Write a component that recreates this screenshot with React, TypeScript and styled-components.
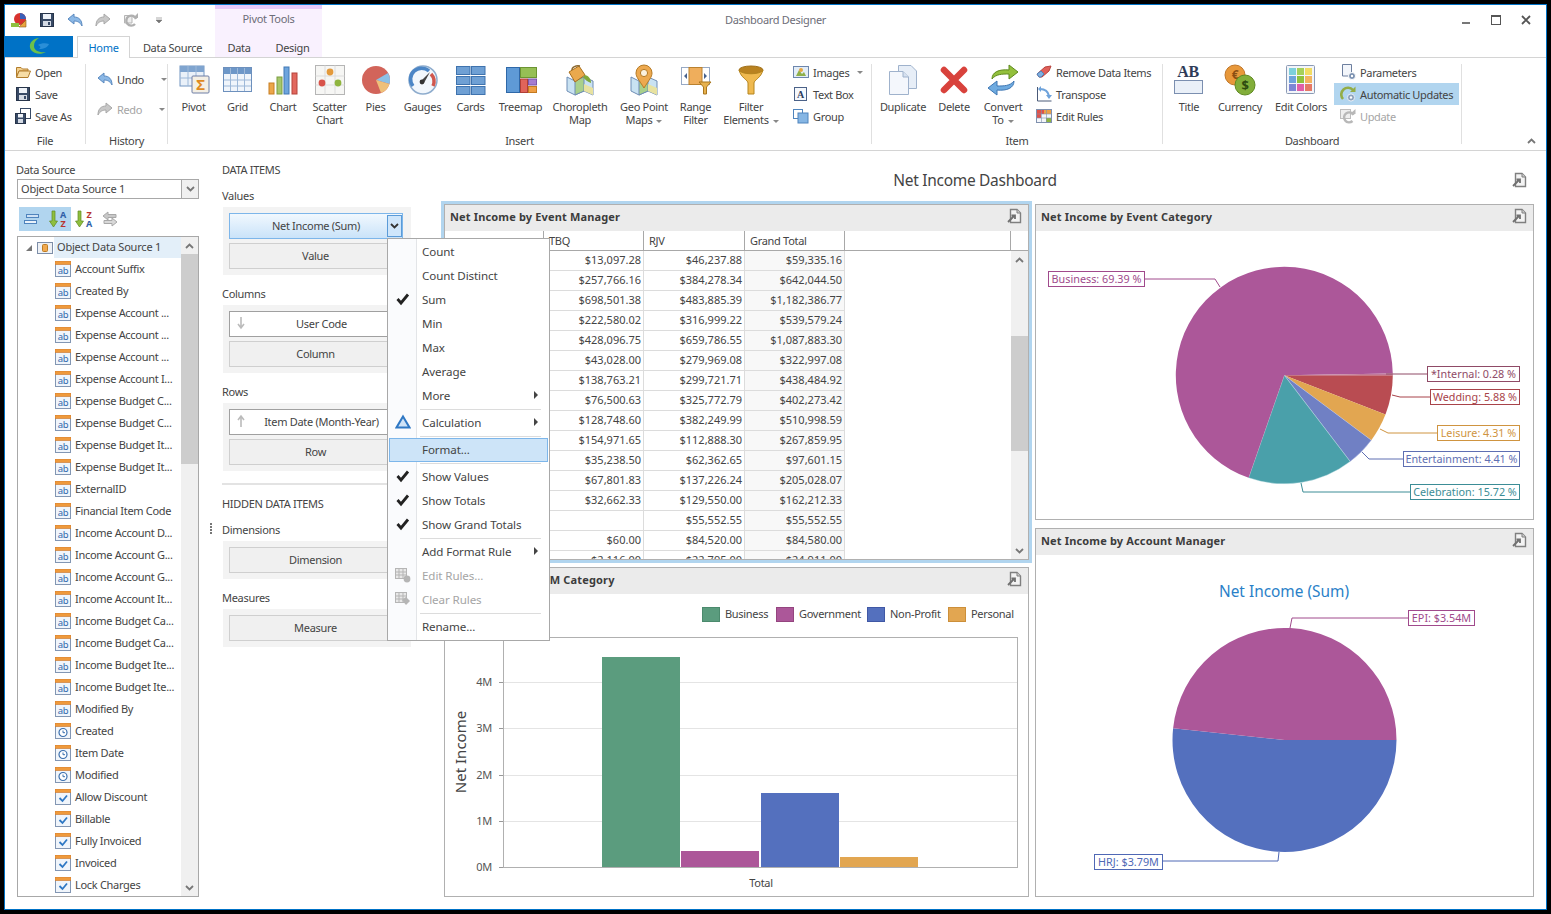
import React from "react";
import styled, { createGlobalStyle } from "styled-components";

const GlobalStyle = createGlobalStyle`
  html, body { margin:0; padding:0; background:#000; }
  body { font-family:"Noto Sans", "Liberation Sans", sans-serif; font-size:11px; letter-spacing:-0.3px; color:#444; }
  svg { display:block; flex-shrink:0; }
  svg text { font-family:"Noto Sans", "Liberation Sans", sans-serif; }
`;

const Window = styled.div`
  position:relative;
  box-sizing:border-box;
  margin:4px 4px 0;
  width:1543px;
  height:906px;
  background:#fff;
  border:1px solid #0072c6;
  display:flex;
  flex-direction:column;
  overflow:hidden;
`;

/* ---------- title area ---------- */
const TitleArea = styled.div`
  display:flex;
  height:52px;
  border-bottom:1px solid #d4d4d4;
  flex-shrink:0;
`;
const LeftStack = styled.div`
  width:210px;
  display:flex;
  flex-direction:column;
`;
const Qat = styled.div`
  display:flex;
  box-sizing:border-box;
  height:31px;
  padding-bottom:2px;
  align-items:center;
`;
const QatButton = styled.div`
  width:28px;
  display:flex;
  justify-content:center;
`;
const TabRow = styled.div`
  display:flex;
  height:21px;
`;
const LogoTab = styled.div`
  width:68px;
  margin-right:4px;
  background:#0072c6;
  display:flex;
  align-items:center;
  justify-content:center;
`;
const Tab = styled.div<{ $w: number; $active?: boolean }>`
  box-sizing:border-box;
  width:${p => p.$w}px;
  height:${p => (p.$active ? 22 : 21)}px;
  text-align:center;
  line-height:23px;
  color:${p => (p.$active ? "#0072c6" : "#444")};
  ${p => p.$active && "border:1px solid #d4d4d4; border-bottom:none; background:#fff; line-height:21px; position:relative; z-index:1;"}
`;
const ContextGroup = styled.div`
  width:107px;
  background:#f9f1fe;
  border-top:4px solid #e6c9fb;
  display:flex;
  flex-direction:column;
`;
const ContextTitle = styled.div`
  height:27px;
  text-align:center;
  line-height:20px;
  color:#6d6d78;
`;
const TitleRight = styled.div`
  flex:1;
  display:flex;
  align-items:flex-start;
  height:31px;
`;
const AppTitle = styled.div`
  flex:1;
  padding-left:403px;
  line-height:29px;
  color:#6d6d78;
`;
const WinControls = styled.div`
  display:flex;
  width:90px;
  height:29px;
  padding-right:5px;
  align-items:center;
`;
const WinButton = styled.div`
  width:30px;
  display:flex;
  justify-content:center;
`;

/* ---------- ribbon ---------- */
const Ribbon = styled.div`
  display:flex;
  box-sizing:border-box;
  height:93px;
  padding-top:6px;
  border-bottom:1px solid #d4d4d4;
  flex-shrink:0;
`;
const Group = styled.div<{ $w: number; $pad?: number }>`
  box-sizing:border-box;
  width:${p => p.$w}px;
  height:80px;
  flex-shrink:0;
  padding-left:${p => p.$pad ?? 0}px;
  border-right:1px solid #e0e0e0;
  display:flex;
  flex-direction:column;
`;
const GroupBody = styled.div`
  display:flex;
  height:70px;
  flex-shrink:0;
`;
const GroupLabel = styled.div<{ $pad?: number }>`
  line-height:13px;
  height:14px;
  flex-shrink:0;
  text-align:center;
  margin-left:-${p => p.$pad ?? 0}px;
  color:#444;
`;
const LargeButton = styled.div<{ $w: number }>`
  width:${p => p.$w}px;
  flex-shrink:0;
  display:flex;
  flex-direction:column;
  align-items:center;
`;
const LargeLabel = styled.div`
  margin-top:4px;
  line-height:13px;
  text-align:center;
  white-space:pre-line;
`;
const SmallColumn = styled.div<{ $left?: number; $gap?: number; $top?: number }>`
  display:flex;
  flex-direction:column;
  flex-shrink:0;
  margin-top:${p => p.$top ?? -3}px;
  margin-left:${p => p.$left ?? 0}px;
  gap:${p => p.$gap ?? 0}px;
`;
const SmallButton = styled.div<{ $disabled?: boolean; $on?: boolean }>`
  display:flex;
  align-items:center;
  height:22px;
  gap:4px;
  padding:0 ${p => (p.$on !== undefined ? 6 : 0)}px;
  white-space:nowrap;
  letter-spacing:-0.35px;
  color:${p => (p.$disabled ? "#a5a5a5" : "#444")};
  background:${p => (p.$on ? "#b1d5ef" : "transparent")};
`;
const Caret = styled.span<{ $gap?: number }>`
  display:inline-block;
  width:0;
  height:0;
  margin-left:${p => p.$gap ?? 4}px;
  margin-top:1px;
  vertical-align:middle;
  border-left:3px solid transparent;
  border-right:3px solid transparent;
  border-top:3px solid #888;
`;
const RibbonEnd = styled.div`
  flex:1;
  display:flex;
  justify-content:flex-end;
  align-items:flex-end;
  height:80px;
  padding:0 10px 2px 0;
`;

/* ---------- main ---------- */
const Main = styled.div`
  flex:1;
  display:flex;
  min-height:0;
`;
const SourcePane = styled.div`
  box-sizing:border-box;
  width:194px;
  padding:12px 0 0 11px;
  flex-shrink:0;
`;
const PlainLabel = styled.div`
  line-height:14px;
  height:14px;
  white-space:nowrap;
`;
const Combo = styled.div`
  box-sizing:border-box;
  margin:2px 0 0 1px;
  width:182px;
  height:20px;
  border:1px solid #a8a8a8;
  display:flex;
  align-items:center;
  padding:0 0 0 3px;
  justify-content:space-between;
  line-height:16px;
  letter-spacing:-0.2px;
`;
const ComboArrow = styled.div`
  width:16px;
  height:18px;
  border-left:1px solid #a8a8a8;
  background:#f0f0f0;
  display:flex;
  align-items:center;
  justify-content:center;
`;
const SortBar = styled.div`
  display:flex;
  margin:8px 0 0 3px;
  height:24px;
`;
const SortButton = styled.div<{ $on?: boolean }>`
  width:26px;
  height:24px;
  display:flex;
  align-items:center;
  justify-content:center;
  background:${p => (p.$on ? "#b1d5ef" : "transparent")};
`;
const TreeBox = styled.div`
  box-sizing:border-box;
  margin:5px 0 0 1px;
  width:182px;
  height:661px;
  border:1px solid #a8a8a8;
  display:flex;
`;
const TreeList = styled.div`
  flex:1;
  overflow:hidden;
`;
const RootRow = styled.div`
  display:flex;
  align-items:center;
  height:21px;
  padding-left:7px;
`;
const RootText = styled.div`
  background:#e3eff9;
  line-height:20px;
  height:21px;
  flex:1;
  padding-left:3px;
  margin-left:1px;
  letter-spacing:-0.2px;
`;
const TreeRow = styled.div`
  display:flex;
  align-items:center;
  height:22px;
  padding:0 0 1px 37px;
  box-sizing:border-box;
  gap:4px;
  white-space:nowrap;
`;
const ScrollBar = styled.div`
  width:17px;
  background:#f0f0f0;
  display:flex;
  flex-direction:column;
  flex-shrink:0;
`;
const ScrollArrow = styled.div`
  height:17px;
  display:flex;
  align-items:center;
  justify-content:center;
  flex-shrink:0;
`;
const ScrollTrack = styled.div`
  flex:1;
  min-height:0;
`;
const ScrollThumb = styled.div<{ $top: number; $h: number }>`
  margin-top:${p => p.$top}px;
  height:${p => p.$h}px;
  background:#cdcdcd;
`;
const Splitter = styled.div`
  width:23px;
  flex-shrink:0;
  display:flex;
  flex-direction:column;
  gap:1px;
  padding:372px 0 0 11px;
  box-sizing:border-box;
`;
const SplitDot = styled.div`
  width:2px;
  height:2px;
  background:#777;
`;
const ItemsPane = styled.div`
  width:189px;
  padding-top:12px;
  flex-shrink:0;
`;
const SectionTitle = styled(PlainLabel)`
  margin-bottom:12px;
`;
const SectionLabel = styled(PlainLabel)`
  margin-bottom:4px;
`;
const DropBox = styled.div`
  box-sizing:border-box;
  width:188px;
  margin:0 0 12px 1px;
  padding:6px 8px 6px 6px;
  background:#f3f3f3;
  display:flex;
  flex-direction:column;
  gap:4px;
`;
const DropButton = styled.div<{ $kind?: "selected" | "field" }>`
  box-sizing:border-box;
  position:relative;
  height:26px;
  width:174px;
  display:flex;
  align-items:center;
  justify-content:center;
  border:1px solid ${p => (p.$kind === "selected" ? "#7db6ea" : p.$kind === "field" ? "#a0a0a0" : "#cfcfcf")};
  background:${p => (p.$kind === "selected" ? "linear-gradient(#f1f8fe,#cae3f9)" : p.$kind === "field" ? "#fff" : "#f0f0f0")};
  padding:0 ${p => (p.$kind === "selected" ? 0 : 1)}px 2px ${p => (p.$kind === "field" ? 12 : 0)}px;
  white-space:nowrap;
`;
const DropSplit = styled.div`
  position:absolute;
  right:0;
  top:1px;
  box-sizing:border-box;
  width:15px;
  height:22px;
  border:1px solid #5b9bd8;
  background:#cfe6fb;
  display:flex;
  align-items:center;
  justify-content:center;
`;
const SortArrow = styled.div`
  position:absolute;
  left:5px;
  top:4px;
`;
const Divider = styled.div`
  height:2px;
  background:#e3e3e3;
  margin:0 0 12px 0;
`;

/* ---------- context menu ---------- */
const Menu = styled.div`
  position:absolute;
  z-index:5;
  left:382px;
  top:233px;
  box-sizing:border-box;
  width:163px;
  height:403px;
  border:1px solid #a8a8a8;
  padding:1px;
  background:linear-gradient(to right,#fafbfd 28px,#e3e5e8 28px,#e3e5e8 29px,#fff 29px);
`;
const MenuText = styled.div`
  flex:1;
  padding-left:5px;
`;
const MenuRow = styled.div<{ $hot?: boolean; $off?: boolean }>`
  box-sizing:border-box;
  height:24px;
  padding-bottom:2px;
  display:flex;
  align-items:center;
  font-size:11.6px;
  letter-spacing:-0.1px;
  color:${p => (p.$off ? "#a5a5a5" : "#444")};
  ${p => p.$hot && "background:#cde4f8; border:1px solid #7db6ea;"}
  ${MenuText} { padding-left:${p => (p.$hot ? 4 : 5)}px; }
`;
const MenuIcon = styled.div`
  width:28px;
  display:flex;
  justify-content:center;
  flex-shrink:0;
`;
const MenuArrow = styled.div`
  width:0;
  height:0;
  margin-right:10px;
  border-top:4px solid transparent;
  border-bottom:4px solid transparent;
  border-left:4px solid #444;
`;
const MenuSep = styled.div`
  height:3px;
  display:flex;
  align-items:center;
  padding:0 7px 0 31px;
  &::after { content:""; flex:1; height:1px; background:#dcdcdc; }
`;

/* ---------- dashboard ---------- */
const DashPane = styled.div`
  width:1120px;
  margin-left:4px;
  flex-shrink:0;
`;
const DashTitleRow = styled.div`
  display:grid;
  grid-template-columns:1fr auto 1fr;
  align-items:center;
  height:50px;
  padding-top:7px;
  box-sizing:border-box;
`;
const DashTitle = styled.div`
  grid-column:2;
  font-size:15.5px;
  color:#444;
`;
const DashTitleIcon = styled.div`
  justify-self:end;
  margin-right:7px;
`;
const DashGrid = styled.div`
  display:flex;
  gap:3px;
  padding-left:26px;
`;
const LeftCol = styled.div`
  width:591px;
  display:flex;
  flex-direction:column;
  gap:4px;
`;
const RightCol = styled.div`
  width:499px;
  padding-top:3px;
  display:flex;
  flex-direction:column;
  gap:8px;
`;
const Selected = styled.div`
  border:3px solid #b1d5ef;
`;
const Panel = styled.div<{ $h: number; $inset?: boolean }>`
  box-sizing:border-box;
  height:${p => p.$h}px;
  margin:0 ${p => (p.$inset ? 3 : 0)}px;
  border:1px solid #b0b0b0;
  display:flex;
  flex-direction:column;
  overflow:hidden;
`;
const PanelHead = styled.div`
  box-sizing:border-box;
  height:26px;
  flex-shrink:0;
  background:#ebebeb;
  display:flex;
  align-items:center;
  justify-content:space-between;
  padding:0 5px 4px;
  font-weight:700;
  font-size:11px;
  letter-spacing:0.15px;
  color:#3c3c3c;
`;
const PivotHead = styled.div`
  display:grid;
  grid-template-columns:99px 100px 101px 100px 1fr 17px;
  height:19px;
  flex-shrink:0;
  border-bottom:1px solid #a8a8a8;
`;
const PivotHeadCell = styled.div`
  border-right:1px solid #a8a8a8;
  padding-left:5px;
  line-height:19px;
  &:last-child { border-right:none; }
`;
const PivotBody = styled.div`
  flex:1;
  display:flex;
  min-height:0;
`;
const PivotRows = styled.div`
  flex:1;
  overflow:hidden;
`;
const PivotRow = styled.div`
  display:grid;
  grid-template-columns:99px 100px 101px 100px;
  height:20px;
`;
const PivotCell = styled.div<{ $total?: boolean }>`
  box-sizing:border-box;
  border-right:1px solid #dcdcdc;
  border-bottom:1px solid #dcdcdc;
  text-align:right;
  padding-right:2px;
  line-height:18px;
  letter-spacing:0;
  background:${p => (p.$total ? "#f8f8f8" : "#fff")};
`;

/* ---------- icons ---------- */
const Svg = ({ s = 32, children }: { s?: number; children: React.ReactNode }) => (
  <svg width={s} height={s} viewBox={`0 0 ${s} ${s}`}>{children}</svg>
);

const MapBase = () => (
  <>
    <polygon points="3,13 11,17 20,13 29,17 29,31 20,27 11,31 3,27" fill="#c9e2f2" stroke="#6f8db5" />
    <polygon points="11,17 20,13 20,27 11,31" fill="#a9d08a" stroke="#6f8db5" />
    <polygon points="20,20 29,24 29,31 20,27" fill="#e8e2a0" />
  </>
);

const big: Record<string, React.ReactNode> = {
  pivot: (
    <>
      <rect x="2" y="2" width="24" height="20" fill="#eaf1f9" stroke="#7396c2" />
      <rect x="2" y="2" width="24" height="6" fill="#7fa4cf" />
      <path d="M10 2v20M18 2v20M2 14h24" stroke="#9db8d8" />
      <rect x="14" y="12" width="17" height="17" rx="1" fill="#f4efe4" stroke="#6e7fa6" />
      <text x="22.5" y="26" fontSize="15" fontWeight="700" fill="#e08a1e" textAnchor="middle">Σ</text>
    </>
  ),
  grid: (
    <>
      <rect x="1.5" y="3.5" width="28" height="24" fill="#f0f5fb" stroke="#6d90bd" />
      <rect x="2" y="4" width="27" height="6" fill="#6d97c8" />
      <path d="M8.5 4v23M15.5 4v23M22.5 4v23M2 16h27M2 22h27" stroke="#9db8d8" />
    </>
  ),
  chart: (
    <>
      <rect x="2" y="19" width="5" height="11" fill="#eca64a" stroke="#c77f22" />
      <rect x="10" y="13" width="5" height="17" fill="#a7c76b" stroke="#7b9d41" />
      <rect x="17" y="3" width="5" height="27" fill="#6ea5dd" stroke="#4079b5" />
      <rect x="25" y="9" width="5" height="21" fill="#e2685e" stroke="#b5433a" />
    </>
  ),
  scatter: (
    <>
      <rect x="1.5" y="1.5" width="29" height="29" fill="#f6f6f4" stroke="#b5b5b5" />
      <path d="M1.5 12h29M1.5 21h29M11 1.5v29M21 1.5v29" stroke="#dcdcdc" />
      <circle cx="16" cy="8" r="3.4" fill="#e39a3c" />
      <circle cx="8" cy="19" r="3.4" fill="#d8534a" />
      <circle cx="24" cy="19" r="3.4" fill="#8fb53f" />
    </>
  ),
  pies: (
    <>
      <circle cx="16" cy="16" r="14" fill="#d2645a" />
      <path d="M16 16L28 9A14 14 0 0 1 29.5 20Z" fill="#8cc0e6" />
      <path d="M16 16L29.5 20A14 14 0 0 1 21 29Z" fill="#efc07a" />
    </>
  ),
  gauge: (
    <>
      <circle cx="16" cy="16" r="14" fill="#f2f7fc" stroke="#8eaccd" strokeWidth="1.5" />
      <path d="M6 22A11 11 0 0 1 22 7" fill="none" stroke="#4c86c6" strokeWidth="3.5" />
      <path d="M24 10A11 11 0 0 1 26 22" fill="none" stroke="#d0574e" strokeWidth="3.5" />
      <path d="M14 17L23 8L17 19Z" fill="#444" />
      <circle cx="15" cy="18" r="2.4" fill="#333" />
    </>
  ),
  cards: (
    <>
      {[2, 12, 22].map(y => [1, 16].map(x => (
        <rect key={`${x}-${y}`} x={x + 0.5} y={y + 0.5} width="13.5" height="8" fill="#6fa0d4" stroke="#3f73ae" />
      )))}
    </>
  ),
  treemap: (
    <>
      <rect x="1.5" y="3.5" width="13" height="25" fill="#5f9ad6" stroke="#2f68a8" />
      <rect x="15.5" y="3.5" width="16" height="10" fill="#96bf55" stroke="#6c9432" />
      <rect x="15.5" y="15" width="7" height="13.5" fill="#e0645a" stroke="#b03f36" />
      <rect x="23.5" y="15" width="8" height="6" fill="#a57cd0" stroke="#7b55a8" />
      <rect x="23.5" y="22.5" width="8" height="6" fill="#ef9f45" stroke="#c47a20" />
    </>
  ),
  choropleth: (
    <>
      <MapBase />
      <path d="M5 8L15 2L21 11L11 18Z" fill="#eaa94d" stroke="#a9701f" />
      <path d="M8 6A6 4 0 0 1 16 2" fill="none" stroke="#8c6a32" strokeWidth="1.5" />
      <path d="M21 11C25 12 27 15 27 19C24 18 21 16 19 13Z" fill="#7fa83a" />
    </>
  ),
  geo: (
    <>
      <MapBase />
      <path d="M16 24C11 16 8 13 8 9A8 8 0 0 1 24 9C24 13 21 16 16 24Z" fill="#eda94f" stroke="#b57a25" />
      <circle cx="16" cy="9" r="3.6" fill="#fbf1de" stroke="#b57a25" />
    </>
  ),
  range: (
    <>
      <rect x="1.5" y="3.5" width="28" height="17" fill="#fff" stroke="#97a9c4" />
      <rect x="9" y="3.5" width="13" height="17" fill="#efae5c" stroke="#b9812f" />
      <path d="M7 9v6l-3-3zM24 9v6l3-3z" fill="#46618d" />
      <path d="M19 18h12l-4.5 5v7h-3v-7Z" fill="#e6b14e" stroke="#a9761d" />
    </>
  ),
  filter: (
    <>
      <ellipse cx="16" cy="6" rx="12" ry="4" fill="#b98220" stroke="#a06f18" />
      <path d="M4 6C6 14 13 16 13 19V30H19V19C19 16 26 14 28 6C26 11 6 11 4 6Z" fill="#efb94f" stroke="#b5851f" />
    </>
  ),
  duplicate: (
    <>
      <path d="M11.5 1.5H24L29.5 7V24.5H11.5Z" fill="#e7eef7" stroke="#9fb2cc" />
      <path d="M2.5 7.5H16L21.5 13V30.5H2.5Z" fill="#f4f7fc" stroke="#9fb2cc" />
      <path d="M16 7.5V13H21.5" fill="#d6e1ef" stroke="#9fb2cc" />
    </>
  ),
  remove: (
    <path d="M6 6L26 26M26 6L6 26" stroke="#d8423c" strokeWidth="6.5" strokeLinecap="round" />
  ),
  convert: (
    <>
      <path d="M5 15C5 8 12 5 22 6V1L31 8L22 15V10C15 10 9 10 5 15Z" fill="#93c03c" stroke="#5f8a1f" />
      <path d="M27 17C27 24 20 27 10 26V31L1 24L10 17V22C17 22 23 22 27 17Z" fill="#6fabe0" stroke="#3e76b3" />
    </>
  ),
  title: (
    <>
      <text x="15" y="13" fontSize="16" fontWeight="700" fill="#2f3c58" textAnchor="middle" style={{ fontFamily: '"Liberation Serif", serif' }}>AB</text>
      <rect x="1.5" y="16.5" width="28" height="13" fill="#eaf0f8" stroke="#7b8fb0" />
    </>
  ),
  currency: (
    <>
      <circle cx="11" cy="11" r="10" fill="#e8983a" stroke="#c0772a" />
      <text x="11" y="15" fontSize="12" fontWeight="700" fill="#8a4f12" textAnchor="middle">€</text>
      <circle cx="21" cy="21" r="10" fill="#82ae3a" stroke="#5f8a22" />
      <text x="21" y="26" fontSize="13" fontWeight="700" fill="#2d4a10" textAnchor="middle">$</text>
    </>
  ),
  colors: (
    <>
      <rect x="1.5" y="1.5" width="28" height="28" rx="1" fill="#f3f5f9" stroke="#8b9ab5" />
      {["#7ed0dc", "#a5d05a", "#f1dc62", "#6fa4dc", "#8fc23c", "#f3b45e", "#7d86d4", "#e05fa8", "#e67865"].map((c, i) => (
        <rect key={c} x={4 + (i % 3) * 8} y={4 + Math.floor(i / 3) * 8} width="7" height="7" fill={c} />
      ))}
    </>
  ),
};

const Big = ({ name }: { name: string }) => <Svg>{big[name]}</Svg>;

const small: Record<string, React.ReactNode> = {
  open: (
    <>
      <path d="M1.5 3.5H6L7.5 5H13V7H4L1.5 13Z" fill="#f3cf8c" stroke="#b27d2c" />
      <path d="M1.5 13.5L4 7H15.5L13 13.5Z" fill="#f7dda6" stroke="#b27d2c" />
    </>
  ),
  save: (
    <>
      <rect x="1.5" y="1.5" width="13" height="13" fill="#384a66" stroke="#27344a" />
      <rect x="4" y="2" width="8" height="5" fill="#eef2f8" />
      <rect x="4" y="9" width="8" height="5" fill="#d4dae4" />
      <rect x="9" y="10" width="2" height="3" fill="#384a66" />
    </>
  ),
  saveAs: (
    <>
      <rect x="5.5" y="0.5" width="10" height="10" fill="#fff" stroke="#384a66" />
      <rect x="0.5" y="5.5" width="10" height="10" fill="#384a66" stroke="#27344a" />
      <rect x="3" y="6" width="5" height="3.5" fill="#eef2f8" />
      <rect x="3" y="11" width="5" height="4" fill="#d4dae4" />
    </>
  ),
  undo: <path d="M7 2L1 7L7 12V9C10 9 13 10 15 14C15 8 12 5 7 5Z" fill="#8bb8e6" stroke="#5a89bf" />,
  redo: <path d="M9 2L15 7L9 12V9C6 9 3 10 1 14C1 8 4 5 9 5Z" fill="#c8c8c8" stroke="#a8a8a8" />,
  repeat: (
    <>
      <path d="M1.5 3.5H9V11H1.5Z" fill="#eee" stroke="#b5b5b5" />
      <path d="M13 7A5 5 0 1 0 12 12" fill="none" stroke="#b0b0b0" strokeWidth="2.4" />
      <path d="M10 6H15V1Z" fill="#b0b0b0" />
    </>
  ),
  images: (
    <>
      <rect x="0.5" y="2.5" width="15" height="11" fill="#e3edf7" stroke="#6d86ad" />
      <path d="M3 12L6 6L9 10L11 8L13 12Z" fill="#8fb04a" />
      <circle cx="8" cy="6" r="2" fill="#e8a640" />
    </>
  ),
  textbox: (
    <>
      <rect x="1.5" y="1.5" width="12" height="13" fill="#f5f8fc" stroke="#4b6288" />
      <text x="7.5" y="12" fontSize="10" fontWeight="700" fill="#2a3b5c" textAnchor="middle" style={{ fontFamily: '"Liberation Serif", serif' }}>A</text>
    </>
  ),
  group: (
    <>
      <rect x="0.5" y="1.5" width="9" height="9" fill="#fff" stroke="#4f84bd" />
      <rect x="5" y="5" width="10" height="10" fill="#86b6e4" stroke="#4f84bd" />
    </>
  ),
  eraser: (
    <>
      <path d="M1 10L9 3L15 2L13 7L6 13H3Z" fill="#e0605a" stroke="#b8433d" />
      <path d="M1 10L5 7L8 10L5 13H3Z" fill="#7fb0e0" stroke="#4f84bd" />
    </>
  ),
  transpose: (
    <>
      <path d="M1.5 1v14h14" fill="none" stroke="#4a5a78" />
      <path d="M4 3C9 3 12 5 13 10" fill="none" stroke="#6fa3db" strokeWidth="2.2" />
      <path d="M10 9H16L13 13Z" fill="#6fa3db" />
      <path d="M5 0V6L2 3Z" fill="#6fa3db" />
    </>
  ),
  rules: (
    <>
      <rect x="0.5" y="1.5" width="15" height="13" fill="#f4f6fa" stroke="#7f90ae" />
      <rect x="1" y="2" width="7" height="4" fill="#e0524a" />
      <rect x="8" y="2" width="7" height="4" fill="#eea048" />
      <rect x="1" y="6" width="4" height="4" fill="#e0524a" />
      <rect x="10" y="10" width="5" height="4" fill="#8fb53f" />
      <path d="M5.5 2v12M10.5 2v12M1 6h14M1 10h14" stroke="#7f90ae" strokeWidth="0.6" />
    </>
  ),
  params: (
    <>
      <path d="M2.5 0.5H11.5V12H2.5Z" fill="#f3f6fb" stroke="#6d7f9f" />
      <circle cx="12" cy="12" r="3.5" fill="#7a90b0" stroke="#fff" />
      <circle cx="12" cy="12" r="1.2" fill="#fff" />
    </>
  ),
  auto: (
    <>
      <path d="M13 4A6.5 6.5 0 1 0 3 13" fill="none" stroke="#93ad47" strokeWidth="2.6" />
      <path d="M10 6H15.5V0.5Z" fill="#93ad47" />
      <circle cx="11" cy="11.5" r="3.6" fill="#8da2bd" stroke="#e8eef5" />
      <circle cx="11" cy="11.5" r="1.2" fill="#fff" />
    </>
  ),
  update: (
    <>
      <rect x="0.5" y="1.5" width="10" height="9" fill="#eee" stroke="#bdbdbd" />
      <path d="M13.5 7A5 5 0 1 0 12.5 13" fill="none" stroke="#b8b8b8" strokeWidth="2.4" />
      <path d="M10 6H15.5V1Z" fill="#b8b8b8" />
    </>
  ),
  export: (
    <>
      <path d="M3.5 1.5H10L13.5 5V14.5H3.5Z" fill="#f3f3f3" stroke="#7f7f7f" strokeWidth="1.4" />
      <path d="M10 1.5V5H13.5" fill="#cfcfcf" stroke="#7f7f7f" />
      <path d="M1 14L7 8M4.5 7.5H8V11" fill="none" stroke="#707070" strokeWidth="1.8" />
    </>
  ),
  tick: <path d="M2.5 8L6 12L13 3.5" fill="none" stroke="#222" strokeWidth="2.8" />,
  calc: (
    <>
      <path d="M8 2.5L14.5 13.5H1.5Z" fill="#cfe3f7" stroke="#2f78c4" strokeWidth="2" />
    </>
  ),
  editRules: (
    <>
      <rect x="0.5" y="1.5" width="11" height="10" fill="#e8e8e8" stroke="#b5b5b5" />
      <path d="M4 2v9M8 2v9M1 5h10M1 8h10" stroke="#b5b5b5" />
      <circle cx="12" cy="12" r="3.4" fill="#b5b5b5" />
    </>
  ),
  clearRules: (
    <>
      <rect x="0.5" y="1.5" width="11" height="10" fill="#e8e8e8" stroke="#b5b5b5" />
      <path d="M4 2v9M8 2v9M1 5h10M1 8h10" stroke="#b5b5b5" />
      <path d="M7 9L11 6L15 10L11 14Z" fill="#b5b5b5" />
    </>
  ),
  colAZ: (
    <>
      <rect x="2.5" y="3.5" width="12" height="3" fill="#cfe2f5" stroke="#4f84bd" />
      <rect x="0.5" y="9.5" width="12" height="3" fill="#eaf2fa" stroke="#4f84bd" />
    </>
  ),
  swap: (
    <>
      <path d="M1 5L6 1V3.5H14V6.5H6V9Z" fill="#c8c8c8" stroke="#a8a8a8" />
      <path d="M15 11L10 7V9.5H2V12.5H10V15Z" fill="#d8d8d8" stroke="#a8a8a8" />
    </>
  ),
  objSource: (
    <>
      <rect x="0.5" y="2.5" width="15" height="11" fill="#eef1f5" stroke="#7d8ea8" />
      <rect x="5.5" y="4.5" width="5" height="7" rx="1" fill="#f0a94f" stroke="#bd7c22" />
    </>
  ),
  app: (
    <>
      <circle cx="9" cy="7" r="6" fill="#d8332f" />
      <path d="M9 7V1A6 6 0 0 1 15 7Z" fill="#3a5fb8" />
      <path d="M0 11h8v4H0Z" fill="#8fbf3f" />
      <path d="M8 15L15 8V15Z" fill="#eaa640" stroke="#8a5a18" strokeWidth="0.6" />
    </>
  ),
};

const Sm = ({ name }: { name: string }) => <Svg s={16}>{small[name]}</Svg>;

const SortIcon = ({ top, bottom }: { top: string; bottom: string }) => (
  <svg width="20" height="21" viewBox="0 0 20 21">
    <path d="M4 2h3v10h2.5L5.5 18L1.5 12H4Z" fill="#8fbf3f" stroke="#5f8a1f" strokeWidth="0.7" />
    <text x="15" y="9" fontSize="9" fontWeight="700" fill={top === "A" ? "#2f5fa8" : "#b8332e"} textAnchor="middle">{top}</text>
    <text x="15" y="18" fontSize="9" fontWeight="700" fill={bottom === "A" ? "#2f5fa8" : "#b8332e"} textAnchor="middle">{bottom}</text>
  </svg>
);

const Chevron = ({ up, color = "#777" }: { up?: boolean; color?: string }) => (
  <svg width="9" height="6" viewBox="0 0 9 6">
    <path d={up ? "M1 5L4.5 1.5L8 5" : "M1 1L4.5 4.5L8 1"} fill="none" stroke={color} strokeWidth="1.8" />
  </svg>
);

const FieldIcon = ({ kind }: { kind: "ab" | "clock" | "check" }) => (
  <Svg s={16}>
    <rect x="0.5" y="0.5" width="15" height="15" fill="#f0f5fb" stroke="#8296b3" />
    <rect x="0" y="0" width="16" height="3.5" fill="#ef9a3c" stroke="#c9742a" strokeWidth="0.6" />
    {kind === "ab" && <text x="8" y="13" fontSize="9.5" fill="#2f68ad" textAnchor="middle">ab</text>}
    {kind === "clock" && (
      <>
        <circle cx="8" cy="9.5" r="4" fill="#fff" stroke="#3a6fae" strokeWidth="1.2" />
        <path d="M8 7.5v2.2h2" fill="none" stroke="#3a6fae" />
      </>
    )}
    {kind === "check" && <path d="M4.5 9L7.5 12L12 6.5" fill="none" stroke="#2f78c4" strokeWidth="1.8" />}
  </Svg>
);

const Logo = () => (
  <svg width="26" height="19" viewBox="0 0 26 19">
    <path d="M13 1C5 2 2 8 5 13C8 17 15 18 20 15C14 16 8 14 8 9C8 5 10 3 13 1Z" fill="#6cc04a" />
    <path d="M12 8C15 6 20 6 23 7C22 10 18 12 13 12C15 11 15 9 12 8Z" fill="#2a8fd8" />
  </svg>
);

/* ---------- data ---------- */
const fields: [string, "ab" | "clock" | "check"][] = [
  ["Account Suffix", "ab"], ["Created By", "ab"], ["Expense Account ...", "ab"], ["Expense Account ...", "ab"],
  ["Expense Account ...", "ab"], ["Expense Account I...", "ab"], ["Expense Budget C...", "ab"], ["Expense Budget C...", "ab"],
  ["Expense Budget It...", "ab"], ["Expense Budget It...", "ab"], ["ExternalID", "ab"], ["Financial Item Code", "ab"],
  ["Income Account D...", "ab"], ["Income Account G...", "ab"], ["Income Account G...", "ab"], ["Income Account It...", "ab"],
  ["Income Budget Ca...", "ab"], ["Income Budget Ca...", "ab"], ["Income Budget Ite...", "ab"], ["Income Budget Ite...", "ab"],
  ["Modified By", "ab"], ["Created", "clock"], ["Item Date", "clock"], ["Modified", "clock"],
  ["Allow Discount", "check"], ["Billable", "check"], ["Fully Invoiced", "check"], ["Invoiced", "check"], ["Lock Charges", "check"],
];

const pivotRows = [
  ["$13,097.28", "$46,237.88", "$59,335.16"],
  ["$257,766.16", "$384,278.34", "$642,044.50"],
  ["$698,501.38", "$483,885.39", "$1,182,386.77"],
  ["$222,580.02", "$316,999.22", "$539,579.24"],
  ["$428,096.75", "$659,786.55", "$1,087,883.30"],
  ["$43,028.00", "$279,969.08", "$322,997.08"],
  ["$138,763.21", "$299,721.71", "$438,484.92"],
  ["$76,500.63", "$325,772.79", "$402,273.42"],
  ["$128,748.60", "$382,249.99", "$510,998.59"],
  ["$154,971.65", "$112,888.30", "$267,859.95"],
  ["$35,238.50", "$62,362.65", "$97,601.15"],
  ["$67,801.83", "$137,226.24", "$205,028.07"],
  ["$32,662.33", "$129,550.00", "$162,212.33"],
  ["", "$55,552.55", "$55,552.55"],
  ["$60.00", "$84,520.00", "$84,580.00"],
  ["$2,116.00", "$22,795.00", "$24,911.00"],
];

const insertButtons: [string, string, number, boolean?][] = [
  ["pivot", "Pivot", 43], ["grid", "Grid", 45], ["chart", "Chart", 46], ["scatter", "Scatter\nChart", 47],
  ["pies", "Pies", 45], ["gauge", "Gauges", 49], ["cards", "Cards", 47], ["treemap", "Treemap", 53],
  ["choropleth", "Choropleth\nMap", 66], ["geo", "Geo Point\nMaps", 62, true], ["range", "Range\nFilter", 41], ["filter", "Filter\nElements", 70, true],
];

const piePoint = (cx: number, cy: number, r: number, deg: number) => {
  const a = (deg * Math.PI) / 180;
  return `${(cx + r * Math.cos(a)).toFixed(2)} ${(cy + r * Math.sin(a)).toFixed(2)}`;
};
const slice = (cx: number, cy: number, r: number, from: number, to: number) =>
  `M${cx} ${cy}L${piePoint(cx, cy, r, from)}A${r} ${r} 0 ${to - from > 180 ? 1 : 0} 1 ${piePoint(cx, cy, r, to)}Z`;

type PieLabel = { text: string; color: string; x: number; y: number; w: number; line: string };
const PieTag = ({ l }: { l: PieLabel }) => (
  <>
    <polyline points={l.line} fill="none" stroke={l.color} />
    <rect x={l.x} y={l.y} width={l.w} height="15" fill="#fff" stroke={l.color} />
    <text x={l.x + l.w / 2} y={l.y + 11.5} fontSize="10.8" letterSpacing="0" fill={l.color} textAnchor="middle">{l.text}</text>
  </>
);

const categoryLabels: PieLabel[] = [
  { text: "Business: 69.39 %", color: "#a04a8c", x: 1048.5, y: 271.5, w: 96, line: "1145,279 1215,279 1220,287" },
  { text: "*Internal: 0.28 %", color: "#8f4a66", x: 1427.5, y: 366.5, w: 92, line: "1427,374 1386,374" },
  { text: "Wedding: 5.88 %", color: "#a8434a", x: 1430.5, y: 389.5, w: 89, line: "1430,397 1400,397 1392,395" },
  { text: "Leisure: 4.31 %", color: "#cf9440", x: 1437.5, y: 425.5, w: 82, line: "1437,433 1388,433 1380,429" },
  { text: "Entertainment: 4.41 %", color: "#5f6fb2", x: 1403.5, y: 451.5, w: 116, line: "1403,459 1369,459 1362,452" },
  { text: "Celebration: 15.72 %", color: "#3c8d96", x: 1410.5, y: 484.5, w: 109, line: "1410,492 1303,492 1301,483" },
];

const accountLabels: PieLabel[] = [
  { text: "EPI: $3.54M", color: "#a04a8c", x: 1408.5, y: 610.5, w: 66, line: "1408,618 1292,618 1290,628" },
  { text: "HRJ: $3.79M", color: "#4f68b5", x: 1094.5, y: 854.5, w: 68, line: "1162,861 1278,861 1279,852" },
];

const CategoryPie = () => {
  const cx = 1284.3, cy = 375.3, r = 108.5;
  return (
    <svg width="497" height="288" viewBox="1036 231 497 288">
      <path d={slice(cx, cy, r, 0, 21.2)} fill="#b94c52" />
      <path d={slice(cx, cy, r, 21.2, 36.7)} fill="#e2a651" />
      <path d={slice(cx, cy, r, 36.7, 52.6)} fill="#7080c4" stroke="#c8d0ee" strokeWidth="0.4" />
      <path d={slice(cx, cy, r, 52.6, 109.2)} fill="#4aa0aa" stroke="#c8e4e8" strokeWidth="0.4" />
      <path d={slice(cx, cy, r, 109.2, 359)} fill="#ac5799" />
      <path d={slice(cx, cy, r, 359, 360)} fill="#c27a9a" />
      {categoryLabels.map(l => <PieTag key={l.text} l={l} />)}
    </svg>
  );
};

const AccountPie = () => {
  const cx = 1284.5, cy = 740, r = 112;
  return (
    <svg width="497" height="341" viewBox="1036 555 497 341">
      <text x="1284" y="597" fontSize="15.4" letterSpacing="0" fill="#2a7fc8" textAnchor="middle">Net Income (Sum)</text>
      <path d={slice(cx, cy, r, 0, 186)} fill="#5470be" />
      <path d={slice(cx, cy, r, 186, 360)} fill="#ac5799" />
      {accountLabels.map(l => <PieTag key={l.text} l={l} />)}
    </svg>
  );
};

const legend = [
  { name: "Business", color: "#5b9c7e", edge: "#4b8a6d", x: 702 },
  { name: "Government", color: "#ac5799", edge: "#94457f", x: 776 },
  { name: "Non-Profit", color: "#5470be", edge: "#4058a5", x: 867 },
  { name: "Personal", color: "#e2a651", edge: "#cc8f3a", x: 948 },
];
const bars = [
  { x: 602, y: 657, color: "#5b9c7e" },
  { x: 681, y: 851, color: "#ac5799" },
  { x: 761, y: 793, color: "#5470be" },
  { x: 840, y: 857, color: "#e2a651" },
];
const ticks = [["0M", 867], ["1M", 821], ["2M", 775], ["3M", 728], ["4M", 682]] as [string, number][];

const ColumnChart = () => (
  <svg width="583" height="302" viewBox="445 594 583 302">
    {legend.map(l => (
      <g key={l.name}>
        <rect x={l.x + 0.5} y="607.5" width="17" height="14" fill={l.color} stroke={l.edge} />
        <text x={l.x + 23} y="618" fontSize="11" fill="#444">{l.name}</text>
      </g>
    ))}
    <rect x="503.5" y="637.5" width="514" height="230" fill="#fff" stroke="#b0b0b0" />
    {ticks.map(([t, y]) => (
      <g key={t}>
        {y !== 867 && <line x1="504" x2="1017" y1={y + 0.5} y2={y + 0.5} stroke="#e4e4e4" />}
        <line x1="499" x2="503" y1={y + 0.5} y2={y + 0.5} stroke="#999" />
        <text x="492" y={y + 4} fontSize="11" fill="#555" textAnchor="end">{t}</text>
      </g>
    ))}
    {bars.map(b => <rect key={b.x} x={b.x} y={b.y} width="78" height={867 - b.y} fill={b.color} />)}
    <text x="761" y="887" fontSize="11" fill="#444" textAnchor="middle">Total</text>
    <text transform="translate(466 752) rotate(-90)" fontSize="15" letterSpacing="0" fill="#444" textAnchor="middle">Net Income</text>
  </svg>
);

function App() {
  return (
    <>
      <GlobalStyle />
      <Window>
        <TitleArea>
          <LeftStack>
            <Qat>
              <QatButton><Sm name="app" /></QatButton>
              <QatButton><Sm name="save" /></QatButton>
              <QatButton><Sm name="undo" /></QatButton>
              <QatButton><Sm name="redo" /></QatButton>
              <QatButton><Sm name="repeat" /></QatButton>
              <QatButton>
                <svg width="6" height="6" viewBox="0 0 6 6"><path d="M0 1h6M0 3h6L3 6Z" fill="#777" stroke="#777" strokeWidth="0.6" /></svg>
              </QatButton>
            </Qat>
            <TabRow>
              <LogoTab><Logo /></LogoTab>
              <Tab $w={53} $active>Home</Tab>
              <Tab $w={85}>Data Source</Tab>
            </TabRow>
          </LeftStack>
          <ContextGroup>
            <ContextTitle>Pivot Tools</ContextTitle>
            <TabRow>
              <Tab $w={48}>Data</Tab>
              <Tab $w={59}>Design</Tab>
            </TabRow>
          </ContextGroup>
          <TitleRight>
            <AppTitle>Dashboard Designer</AppTitle>
            <WinControls>
              <WinButton>
                <svg width="10" height="10" viewBox="0 0 10 10"><rect x="1" y="7" width="8" height="2" fill="#777" /></svg>
              </WinButton>
              <WinButton>
                <svg width="10" height="10" viewBox="0 0 10 10"><rect x="0.5" y="0.5" width="9" height="9" fill="none" stroke="#555" /><rect x="0" y="0" width="10" height="2" fill="#555" /></svg>
              </WinButton>
              <WinButton>
                <svg width="10" height="10" viewBox="0 0 10 10"><path d="M1 1L9 9M9 1L1 9" stroke="#555" strokeWidth="1.8" /></svg>
              </WinButton>
            </WinControls>
          </TitleRight>
        </TitleArea>

        <Ribbon>
          <Group $w={81} $pad={10}>
            <GroupBody>
              <SmallColumn>
                <SmallButton><Sm name="open" />Open</SmallButton>
                <SmallButton><Sm name="save" />Save</SmallButton>
                <SmallButton><Sm name="saveAs" />Save As</SmallButton>
              </SmallColumn>
            </GroupBody>
            <GroupLabel $pad={10}>File</GroupLabel>
          </Group>
          <Group $w={82} $pad={11}>
            <GroupBody>
              <SmallColumn $top={4} $gap={8}>
                <SmallButton><Sm name="undo" />Undo<Caret $gap={13} /></SmallButton>
                <SmallButton $disabled><Sm name="redo" />Redo<Caret $gap={13} /></SmallButton>
              </SmallColumn>
            </GroupBody>
            <GroupLabel $pad={11}>History</GroupLabel>
          </Group>
          <Group $w={704} $pad={4}>
            <GroupBody>
              {insertButtons.map(([icon, label, w, caret]) => (
                <LargeButton key={icon} $w={w}>
                  <Big name={icon} />
                  <LargeLabel>{label}{caret && <Caret />}</LargeLabel>
                </LargeButton>
              ))}
              <SmallColumn $left={7}>
                <SmallButton><Sm name="images" />Images<Caret /></SmallButton>
                <SmallButton><Sm name="textbox" />Text Box</SmallButton>
                <SmallButton><Sm name="group" />Group</SmallButton>
              </SmallColumn>
            </GroupBody>
            <GroupLabel $pad={4}>Insert</GroupLabel>
          </Group>
          <Group $w={291} $pad={4}>
            <GroupBody>
              <LargeButton $w={54}><Big name="duplicate" /><LargeLabel>Duplicate</LargeLabel></LargeButton>
              <LargeButton $w={48}><Big name="remove" /><LargeLabel>Delete</LargeLabel></LargeButton>
              <LargeButton $w={50}><Big name="convert" /><LargeLabel>Convert{"\n"}To<Caret /></LargeLabel></LargeButton>
              <SmallColumn $left={8}>
                <SmallButton><Sm name="eraser" />Remove Data Items</SmallButton>
                <SmallButton><Sm name="transpose" />Transpose</SmallButton>
                <SmallButton><Sm name="rules" />Edit Rules</SmallButton>
              </SmallColumn>
            </GroupBody>
            <GroupLabel $pad={4}>Item</GroupLabel>
          </Group>
          <Group $w={299} $pad={3}>
            <GroupBody>
              <LargeButton $w={46}><Big name="title" /><LargeLabel>Title</LargeLabel></LargeButton>
              <LargeButton $w={56}><Big name="currency" /><LargeLabel>Currency</LargeLabel></LargeButton>
              <LargeButton $w={66}><Big name="colors" /><LargeLabel>Edit Colors</LargeLabel></LargeButton>
              <SmallColumn>
                <SmallButton $on={false}><Sm name="params" />Parameters</SmallButton>
                <SmallButton $on><Sm name="auto" />Automatic Updates</SmallButton>
                <SmallButton $on={false} $disabled><Sm name="update" />Update</SmallButton>
              </SmallColumn>
            </GroupBody>
            <GroupLabel $pad={3}>Dashboard</GroupLabel>
          </Group>
          <RibbonEnd><Chevron up /></RibbonEnd>
        </Ribbon>

        <Main>
          <SourcePane>
            <PlainLabel>Data Source</PlainLabel>
            <Combo>
              Object Data Source 1
              <ComboArrow><Chevron /></ComboArrow>
            </Combo>
            <SortBar>
              <SortButton $on><Sm name="colAZ" /></SortButton>
              <SortButton $on><SortIcon top="A" bottom="Z" /></SortButton>
              <SortButton><SortIcon top="Z" bottom="A" /></SortButton>
              <SortButton><Sm name="swap" /></SortButton>
            </SortBar>
            <TreeBox>
              <TreeList>
                <RootRow>
                  <svg width="12" height="8" viewBox="0 0 12 8"><path d="M1 7L7 7L7 1Z" fill="#777" /></svg>
                  <Sm name="objSource" />
                  <RootText>Object Data Source 1</RootText>
                </RootRow>
                {fields.map(([name, kind], i) => (
                  <TreeRow key={i}><FieldIcon kind={kind} />{name}</TreeRow>
                ))}
              </TreeList>
              <ScrollBar>
                <ScrollArrow><Chevron up /></ScrollArrow>
                <ScrollTrack><ScrollThumb $top={0} $h={210} /></ScrollTrack>
                <ScrollArrow><Chevron /></ScrollArrow>
              </ScrollBar>
            </TreeBox>
          </SourcePane>

          <Splitter>
            {[0, 1, 2, 3].map(i => <SplitDot key={i} />)}
          </Splitter>

          <ItemsPane>
            <SectionTitle>DATA ITEMS</SectionTitle>
            <SectionLabel>Values</SectionLabel>
            <DropBox>
              <DropButton $kind="selected">
                Net Income (Sum)
                <DropSplit><Chevron color="#333" /></DropSplit>
              </DropButton>
              <DropButton>Value</DropButton>
            </DropBox>
            <SectionLabel>Columns</SectionLabel>
            <DropBox>
              <DropButton $kind="field">
                <SortArrow>
                  <svg width="12" height="14" viewBox="0 0 12 14"><path d="M6 1v10M3 8l3 4l3-4" fill="none" stroke="#bbb" strokeWidth="1.6" /></svg>
                </SortArrow>
                User Code
              </DropButton>
              <DropButton>Column</DropButton>
            </DropBox>
            <SectionLabel>Rows</SectionLabel>
            <DropBox>
              <DropButton $kind="field">
                <SortArrow>
                  <svg width="12" height="14" viewBox="0 0 12 14"><path d="M6 13V3M3 6l3-4l3 4" fill="none" stroke="#bbb" strokeWidth="1.6" /></svg>
                </SortArrow>
                Item Date (Month-Year)
              </DropButton>
              <DropButton>Row</DropButton>
            </DropBox>
            <Divider />
            <SectionTitle>HIDDEN DATA ITEMS</SectionTitle>
            <SectionLabel>Dimensions</SectionLabel>
            <DropBox><DropButton>Dimension</DropButton></DropBox>
            <SectionLabel>Measures</SectionLabel>
            <DropBox><DropButton>Measure</DropButton></DropBox>
          </ItemsPane>

          <DashPane>
            <DashTitleRow>
              <DashTitle>Net Income Dashboard</DashTitle>
              <DashTitleIcon><Sm name="export" /></DashTitleIcon>
            </DashTitleRow>
            <DashGrid>
              <LeftCol>
                <Selected>
                  <Panel $h={356}>
                    <PanelHead>Net Income by Event Manager<Sm name="export" /></PanelHead>
                    <PivotHead>
                      <PivotHeadCell />
                      <PivotHeadCell>TBQ</PivotHeadCell>
                      <PivotHeadCell>RJV</PivotHeadCell>
                      <PivotHeadCell>Grand Total</PivotHeadCell>
                      <PivotHeadCell />
                      <PivotHeadCell />
                    </PivotHead>
                    <PivotBody>
                      <PivotRows>
                        {pivotRows.map((r, i) => (
                          <PivotRow key={i}>
                            <PivotCell />
                            <PivotCell>{r[0]}</PivotCell>
                            <PivotCell>{r[1]}</PivotCell>
                            <PivotCell $total>{r[2]}</PivotCell>
                          </PivotRow>
                        ))}
                      </PivotRows>
                      <ScrollBar>
                        <ScrollArrow><Chevron up /></ScrollArrow>
                        <ScrollTrack><ScrollThumb $top={68} $h={115} /></ScrollTrack>
                        <ScrollArrow><Chevron /></ScrollArrow>
                      </ScrollBar>
                    </PivotBody>
                  </Panel>
                </Selected>
                <Panel $h={330} $inset>
                  <PanelHead>Net Income by CRM Category<Sm name="export" /></PanelHead>
                  <ColumnChart />
                </Panel>
              </LeftCol>
              <RightCol>
                <Panel $h={316}>
                  <PanelHead>Net Income by Event Category<Sm name="export" /></PanelHead>
                  <CategoryPie />
                </Panel>
                <Panel $h={369}>
                  <PanelHead>Net Income by Account Manager<Sm name="export" /></PanelHead>
                  <AccountPie />
                </Panel>
              </RightCol>
            </DashGrid>
          </DashPane>
        </Main>

        <Menu>
          {["Count", "Count Distinct", "Sum", "Min", "Max", "Average"].map(t => (
            <MenuRow key={t}>
              <MenuIcon>{t === "Sum" && <Sm name="tick" />}</MenuIcon>
              <MenuText>{t}</MenuText>
            </MenuRow>
          ))}
          <MenuRow><MenuIcon /><MenuText>More</MenuText><MenuArrow /></MenuRow>
          <MenuSep />
          <MenuRow><MenuIcon><Sm name="calc" /></MenuIcon><MenuText>Calculation</MenuText><MenuArrow /></MenuRow>
          <MenuSep />
          <MenuRow $hot><MenuIcon /><MenuText>Format...</MenuText></MenuRow>
          <MenuSep />
          {["Show Values", "Show Totals", "Show Grand Totals"].map(t => (
            <MenuRow key={t}>
              <MenuIcon><Sm name="tick" /></MenuIcon>
              <MenuText>{t}</MenuText>
            </MenuRow>
          ))}
          <MenuSep />
          <MenuRow><MenuIcon /><MenuText>Add Format Rule</MenuText><MenuArrow /></MenuRow>
          <MenuRow $off><MenuIcon><Sm name="editRules" /></MenuIcon><MenuText>Edit Rules...</MenuText></MenuRow>
          <MenuRow $off><MenuIcon><Sm name="clearRules" /></MenuIcon><MenuText>Clear Rules</MenuText></MenuRow>
          <MenuSep />
          <MenuRow><MenuIcon /><MenuText>Rename...</MenuText></MenuRow>
        </Menu>
      </Window>
    </>
  );
}

export default App;
